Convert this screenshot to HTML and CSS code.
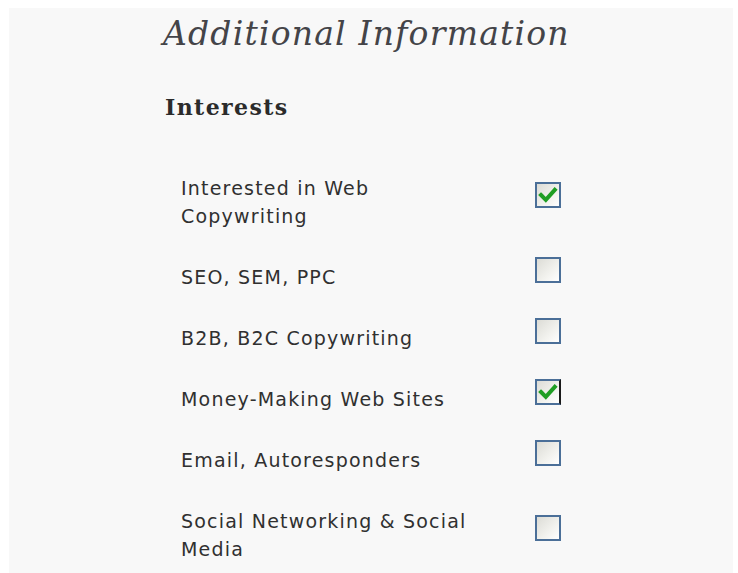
FILE: index.html
```html
<!DOCTYPE html>
<html lang="en">
<head>
<meta charset="utf-8">
<title>Additional Information</title>
<link rel="stylesheet" href="styles.css">
</head>
<body>
<div class="panel">
  <h1 class="title">Additional Information</h1>
  <h2 class="section">Interests</h2>
  <ul class="interests">
    <li class="row">
      <span class="label">Interested in Web Copywriting</span>
      <span class="box checked" role="checkbox" aria-checked="true">
        <svg viewBox="0 0 22 22" width="22" height="22"><path d="M4 11 L8.8 15.8 L17.8 5.8" fill="none" stroke="#1f9e23" stroke-width="4" stroke-linecap="square"/></svg>
      </span>
    </li>
    <li class="row">
      <span class="label">SEO, SEM, PPC</span>
      <span class="box" role="checkbox" aria-checked="false"></span>
    </li>
    <li class="row">
      <span class="label">B2B, B2C Copywriting</span>
      <span class="box" role="checkbox" aria-checked="false"></span>
    </li>
    <li class="row">
      <span class="label">Money-Making Web Sites</span>
      <span class="box checked focused" role="checkbox" aria-checked="true">
        <svg viewBox="0 0 22 22" width="22" height="22"><path d="M4 11 L8.8 15.8 L17.8 5.8" fill="none" stroke="#1f9e23" stroke-width="4" stroke-linecap="square"/></svg>
      </span>
    </li>
    <li class="row">
      <span class="label">Email, Autoresponders</span>
      <span class="box" role="checkbox" aria-checked="false"></span>
    </li>
    <li class="row">
      <span class="label">Social Networking &amp; Social Media</span>
      <span class="box" role="checkbox" aria-checked="false"></span>
    </li>
  </ul>
</div>
</body>
</html>
```

FILE: styles.css
```css
html, body {
  margin: 0;
  padding: 0;
  background: #ffffff;
}

body {
  padding: 8px 5px 0 9px;
}

.panel {
  background: #f8f8f8;
  min-height: 565px;
  padding: 4px 0 0 154px;
  box-sizing: border-box;
}

.title {
  margin: 0;
  font-family: "DejaVu Serif", Georgia, serif;
  font-style: italic;
  font-weight: normal;
  font-size: 33px;
  letter-spacing: 1.2px;
  line-height: 44px;
  color: #444448;
}

.section {
  margin: 38px 0 0 2px;
  font-family: "DejaVu Serif", Georgia, serif;
  font-weight: bold;
  font-size: 22px;
  letter-spacing: 1.4px;
  line-height: 26px;
  color: #2b2b2b;
}

.interests {
  list-style: none;
  margin: 54px 0 0 18px;
  padding: 0;
  display: flex;
  flex-direction: column;
  gap: 33px;
}

.row {
  display: flex;
  align-items: center;
}

.label {
  width: 295px;
  font-family: "DejaVu Sans", Verdana, sans-serif;
  font-size: 19px;
  letter-spacing: 1.2px;
  line-height: 28px;
  color: #303030;
}

.box {
  margin-left: 59px;
  margin-top: -14px;
  width: 22px;
  height: 22px;
  border: 2px solid #4b6f98;
  background: linear-gradient(135deg, #dcdcd6 0%, #f2f2ee 60%, #ffffff 100%);
  display: flex;
  align-items: center;
  justify-content: center;
}

.box svg {
  display: block;
}

.box.focused {
  border-right-color: #1a1a1a;
}
```
